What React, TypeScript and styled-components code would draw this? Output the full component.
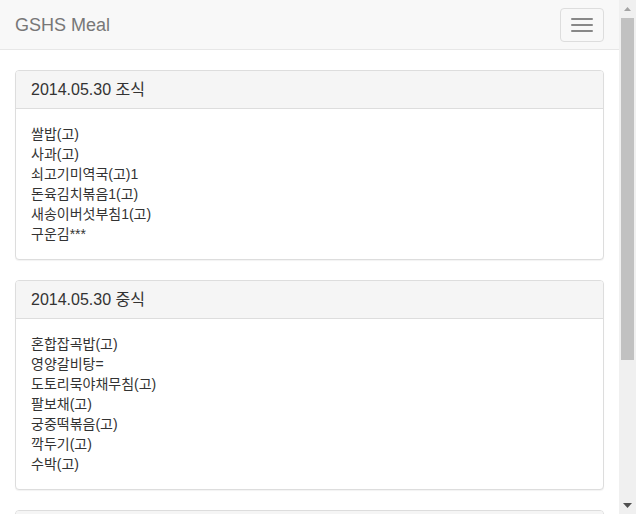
import React from "react";
import styled, { createGlobalStyle } from "styled-components";

const GlobalStyle = createGlobalStyle`
  html, body {
    margin: 0;
    padding: 0;
    overflow: hidden;
  }
  body {
    font-family: "Liberation Sans", "Noto Sans CJK KR", Arial, sans-serif;
    font-size: 14px;
    line-height: 1.42857143;
    color: #333;
    background: #fff;
  }
`;

const Window = styled.div`
  display: flex;
  height: 100vh;
  overflow: hidden;
`;

const Page = styled.div`
  flex: 1;
  min-width: 0;
  overflow: hidden;
`;

const ScrollBar = styled.div`
  width: 17px;
  flex: none;
  display: flex;
  flex-direction: column;
  background: #f0f0f0;
`;

const ScrollArrow = styled.div`
  height: 17px;
  flex: none;
  display: flex;
  align-items: center;
  justify-content: center;
`;

const ScrollTrack = styled.div`
  flex: 1;
  padding: 1px 2px 0;
`;

const ScrollThumb = styled.div`
  height: 342px;
  background: #c1c1c1;
`;

const Navbar = styled.nav`
  display: flex;
  align-items: flex-start;
  justify-content: space-between;
  height: 50px;
  box-sizing: border-box;
  background: #f8f8f8;
  border-bottom: 1px solid #e7e7e7;
  margin-bottom: 20px;
`;

const Brand = styled.a`
  display: block;
  padding: 15px;
  font-size: 18px;
  line-height: 20px;
  color: #777;
  text-decoration: none;
`;

const Toggle = styled.button`
  display: flex;
  flex-direction: column;
  gap: 4px;
  margin: 8px 15px 0 0;
  padding: 9px 10px;
  background: transparent;
  border: 1px solid #ddd;
  border-radius: 4px;
  cursor: pointer;
`;

const IconBar = styled.span`
  display: block;
  width: 22px;
  height: 2px;
  border-radius: 1px;
  background: #888;
`;

const Container = styled.main`
  padding: 0 15px 20px;
  display: flex;
  flex-direction: column;
  gap: 20px;
`;

const Panel = styled.section`
  background: #fff;
  border: 1px solid #ddd;
  border-radius: 4px;
  box-shadow: 0 1px 1px rgba(0, 0, 0, 0.05);
`;

const PanelHeading = styled.div`
  padding: 10px 15px;
  background: #f5f5f5;
  border-bottom: 1px solid #ddd;
  border-radius: 3px 3px 0 0;
  color: #333;
`;

const PanelTitle = styled.h3`
  margin: 0;
  font-size: 16px;
  font-weight: 400;
  line-height: 17px;
`;

const PanelBody = styled.div`
  padding: 15px;
`;

const MenuLine = styled.div`
  line-height: 20px;
`;

const meals = [
  {
    title: "2014.05.30 조식",
    items: [
      "쌀밥(고)",
      "사과(고)",
      "쇠고기미역국(고)1",
      "돈육김치볶음1(고)",
      "새송이버섯부침1(고)",
      "구운김***",
    ],
  },
  {
    title: "2014.05.30 중식",
    items: [
      "혼합잡곡밥(고)",
      "영양갈비탕=",
      "도토리묵야채무침(고)",
      "팔보채(고)",
      "궁중떡볶음(고)",
      "깍두기(고)",
      "수박(고)",
    ],
  },
  {
    title: "2014.05.30 석식",
    items: [
      "쌀밥(고)",
      "콩나물국(고)",
      "닭갈비(고)",
      "오이무침(고)",
      "배추김치(고)",
      "요구르트(고)",
    ],
  },
];

export default function App() {
  return (
    <>
      <GlobalStyle />
      <Window>
        <Page>
          <Navbar>
            <Brand href="#">GSHS Meal</Brand>
            <Toggle aria-label="Toggle navigation">
              <IconBar />
              <IconBar />
              <IconBar />
            </Toggle>
          </Navbar>
          <Container>
            {meals.map((meal) => (
              <Panel key={meal.title}>
                <PanelHeading>
                  <PanelTitle>{meal.title}</PanelTitle>
                </PanelHeading>
                <PanelBody>
                  {meal.items.map((item, i) => (
                    <MenuLine key={i}>{item}</MenuLine>
                  ))}
                </PanelBody>
              </Panel>
            ))}
          </Container>
        </Page>
        <ScrollBar aria-hidden="true">
          <ScrollArrow>
            <svg width="7" height="4" viewBox="0 0 7 4">
              <path d="M3.5 0 L7 4 L0 4 Z" fill="#a3a3a3" />
            </svg>
          </ScrollArrow>
          <ScrollTrack>
            <ScrollThumb />
          </ScrollTrack>
          <ScrollArrow>
            <svg width="9" height="5" viewBox="0 0 9 5">
              <path d="M0 0 L9 0 L4.5 5 Z" fill="#505050" />
            </svg>
          </ScrollArrow>
        </ScrollBar>
      </Window>
    </>
  );
}
